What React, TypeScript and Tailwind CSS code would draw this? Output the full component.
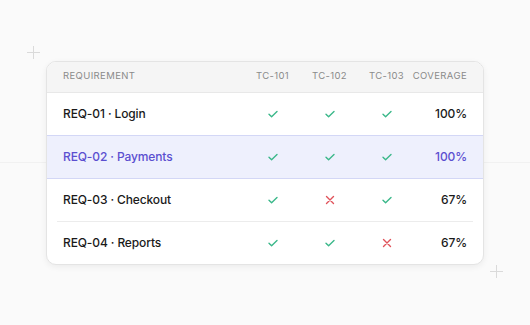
type Status = "pass" | "fail";

interface Row {
  id: string;
  name: string;
  tests: Status[];
  coverage: string;
  active?: boolean;
}

const rows: Row[] = [
  { id: "REQ-01", name: "Login", tests: ["pass", "pass", "pass"], coverage: "100%" },
  { id: "REQ-02", name: "Payments", tests: ["pass", "pass", "pass"], coverage: "100%", active: true },
  { id: "REQ-03", name: "Checkout", tests: ["pass", "fail", "pass"], coverage: "67%" },
  { id: "REQ-04", name: "Reports", tests: ["pass", "pass", "fail"], coverage: "67%" },
];

const cols = "grid grid-cols-[1fr_57px_57px_57px_52px] items-center pl-4 pr-4";

function Plus() {
  return (
    <svg width="13" height="13" viewBox="0 0 13 13" className="text-[#dadada]">
      <path d="M6.5 0v13M0 6.5h13" stroke="currentColor" strokeWidth="1" />
    </svg>
  );
}

function Mark({ s }: { s: Status }) {
  return (
    <div className="flex justify-center">
      {s === "pass" ? (
        <svg width="10" height="10" viewBox="0 0 10 10">
          <path d="M1 5.2l2.6 2.5L9 2.5" fill="none" stroke="#3bb88a" strokeWidth="1.4" strokeLinecap="round" strokeLinejoin="round" />
        </svg>
      ) : (
        <svg width="10" height="10" viewBox="0 0 10 10">
          <path d="M1.5 1.5l7 7M8.5 1.5l-7 7" fill="none" stroke="#e0525a" strokeWidth="1.4" strokeLinecap="round" />
        </svg>
      )}
    </div>
  );
}

export default function App() {
  return (
    <div
      className="relative w-[530px] h-[325px] bg-[#fafafa] flex items-center justify-center overflow-hidden"
      style={{ fontFamily: "Inter, 'Noto Sans', sans-serif" }}
    >
      {/* background deco */}
      <div className="absolute left-0 right-0 top-[162px] h-px bg-[#f1f1f1]" />
      <div className="absolute left-[27px] top-[46px]">
        <Plus />
      </div>
      <div className="absolute left-[490px] top-[265px]">
        <Plus />
      </div>

      <div className="relative w-[438px] rounded-[10px] border border-[#e4e4e4] bg-white shadow-[0_2px_6px_rgba(0,0,0,0.06)] overflow-hidden">
        {/* HEADER */}
        <div className={`${cols} h-[31px] bg-[#f5f5f5] border-b border-[#e8e8e8] text-[9.5px] tracking-[0.04em] text-[#8a8a8a] uppercase`}>
          <div>Requirement</div>
          <div className="text-center">TC-101</div>
          <div className="text-center">TC-102</div>
          <div className="text-center">TC-103</div>
          <div className="justify-self-end whitespace-nowrap">Coverage</div>
        </div>

        {/* ROWS */}
        {rows.map((r, i) => (
          <div
            key={r.id}
            className={r.active ? "bg-[#eef0fd] border-y border-[#d3d7f6]" : ""}
          >
            <div
              className={`${cols} h-[42px] text-[12px] font-medium tracking-[-0.01em] ${
                r.active ? "text-[#5b4fd0]" : "text-[#1a1a1a]"
              }`}
            >
              <div className="whitespace-nowrap">
                {r.id} · {r.name}
              </div>
              {r.tests.map((t, j) => (
                <Mark key={j} s={t} />
              ))}
              <div className="text-right">{r.coverage}</div>
            </div>
            {i === 2 && <div className="mx-[10px] h-px bg-[#ececec]" />}
          </div>
        ))}
      </div>
    </div>
  );
}
